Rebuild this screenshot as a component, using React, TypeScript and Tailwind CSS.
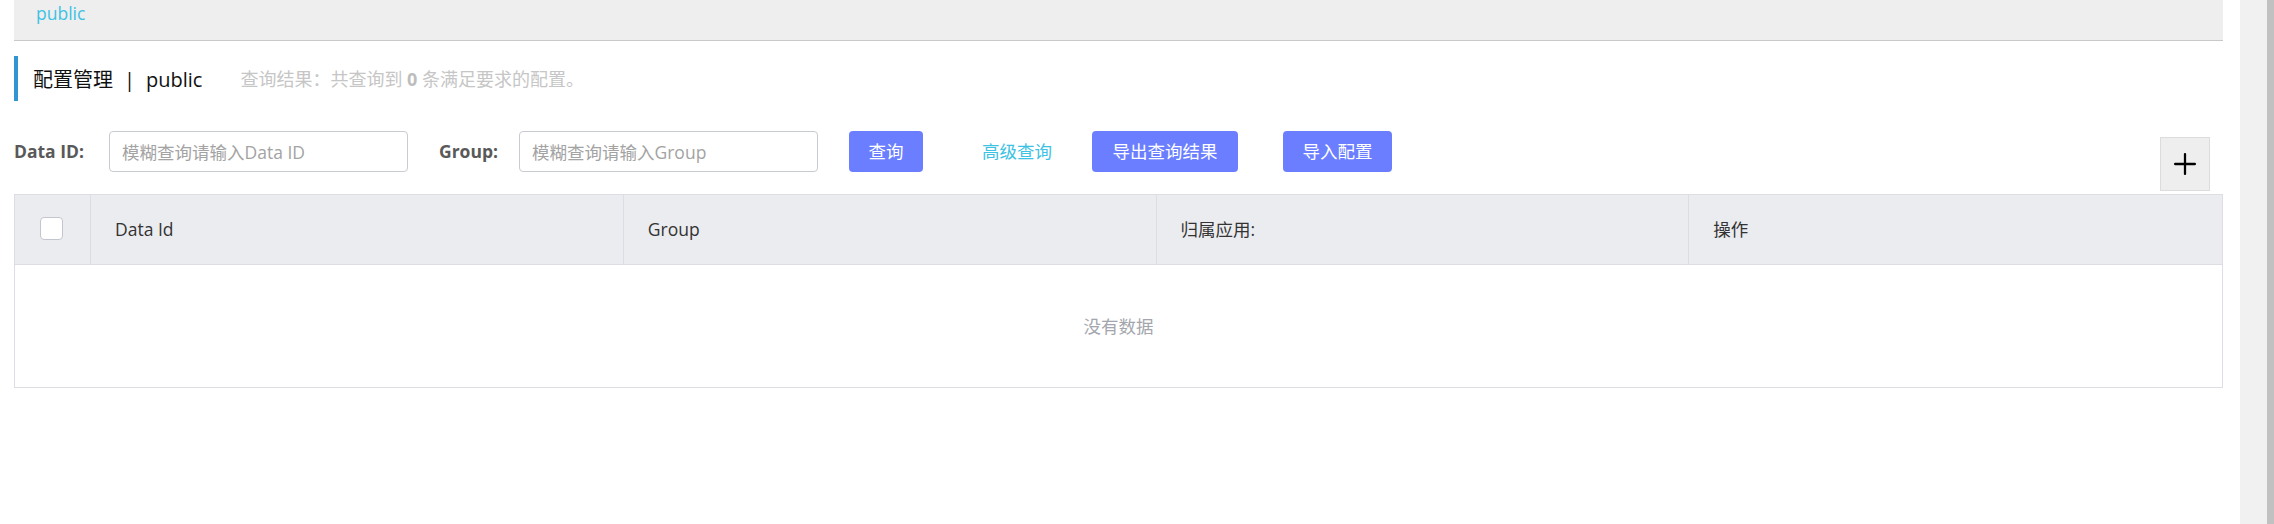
import { Plus } from "lucide-react";

const font = "font-['Open_Sans','Noto_Sans_CJK_SC',sans-serif]";

function Field({ label, placeholder, labelW, ml }: { label: string; placeholder: string; labelW: string; ml: string }) {
  return (
    <div className={`flex items-center ${ml}`}>
      <span className={`${labelW} text-[17.5px] font-bold text-[#595959]`}>{label}</span>
      <input
        className="w-[299px] h-[41px] rounded-[4px] border border-[#c9cbd2] px-[12px] text-[17.5px] outline-none placeholder:text-[#a3a3a3]"
        placeholder={placeholder}
      />
    </div>
  );
}

function Btn({ children, w, ml }: { children: string; w: string; ml: string }) {
  return (
    <button className={`${w} ${ml} h-[41px] rounded-[4px] bg-[#6a7eff] text-[17.5px] text-white`}>
      {children}
    </button>
  );
}

export default function App() {
  const cols = ["Data Id", "Group", "归属应用:", "操作"];

  return (
    <div className={`flex w-[2274px] h-[524px] bg-white overflow-hidden ${font}`}>
      {/* page */}
      <div className="flex-1 flex flex-col pl-[14px] pr-[17px]">
        {/* breadcrumb bar */}
        <div className="h-[41px] bg-[#eeeeee] border-b border-[#c9c9c9] pl-[22px]">
          <span className="text-[17.5px] leading-[26px] text-[#3ec2e3]">public</span>
        </div>

        {/* title */}
        <div className="mt-[15px] h-[45px] border-l-[4px] border-[#2f96d3] flex items-center pl-[15px] pt-[2px]">
          <span className="text-[20px] text-[#111]">配置管理</span>
          <span className="text-[20px] text-[#111] mx-[11px]">|</span>
          <span className="text-[20px] text-[#111]">public</span>
          <span className="ml-[38px] text-[18px] text-[#c6c6c6]">
            查询结果：共查询到 <b className="font-bold text-[#bdbdbd]">0</b> 条满足要求的配置。
          </span>
        </div>

        {/* search form */}
        <div className="mt-[30px] flex items-start">
          <div className="flex items-center h-[41px]">
            <Field label="Data ID:" placeholder="模糊查询请输入Data ID" labelW="w-[95px]" ml="" />
            <Field label="Group:" placeholder="模糊查询请输入Group" labelW="w-[80px]" ml="ml-[31px]" />
            <Btn w="w-[74px]" ml="ml-[31px]">查询</Btn>
            <span className="ml-[59px] text-[17.5px] text-[#3ec2e3]">高级查询</span>
            <Btn w="w-[146px]" ml="ml-[40px]">导出查询结果</Btn>
            <Btn w="w-[109px]" ml="ml-[45px]">导入配置</Btn>
          </div>
          <button className="ml-auto mr-[13px] mt-[6px] w-[50px] h-[54px] bg-[#eeeeee] border border-[#dcdcdc] flex items-center justify-center">
            <Plus size={34} strokeWidth={1.6} color="#000" />
          </button>
        </div>

        {/* table */}
        <div className="mt-[3px] border border-[#dcdee3]">
          <div className="grid grid-cols-[76px_1fr_1fr_1fr_1fr] h-[70px] bg-[#ebecf0] border-b border-[#dcdee3]">
            <div className="flex items-center justify-center border-r border-[#dcdee3]">
              <span className="w-[23px] h-[23px] -ml-[3px] -mt-[3px] rounded-[4px] border border-[#c4c6cf] bg-white" />
            </div>
            {cols.map((c, i) => (
              <div
                key={c}
                className={`flex items-center pl-[24px] text-[17.5px] text-[#333] ${i < cols.length - 1 ? "border-r border-[#dcdee3]" : ""}`}
              >
                {c}
              </div>
            ))}
          </div>
          <div className="h-[122px] flex items-center justify-center text-[17.5px] text-[#a3a6ad]">没有数据</div>
        </div>
      </div>

      {/* scrollbar */}
      <div className="w-[34px] h-full bg-[#f1f1f1] flex justify-end">
        <div className="w-[7px] h-full bg-[#c1c1c1]" />
      </div>
    </div>
  );
}
